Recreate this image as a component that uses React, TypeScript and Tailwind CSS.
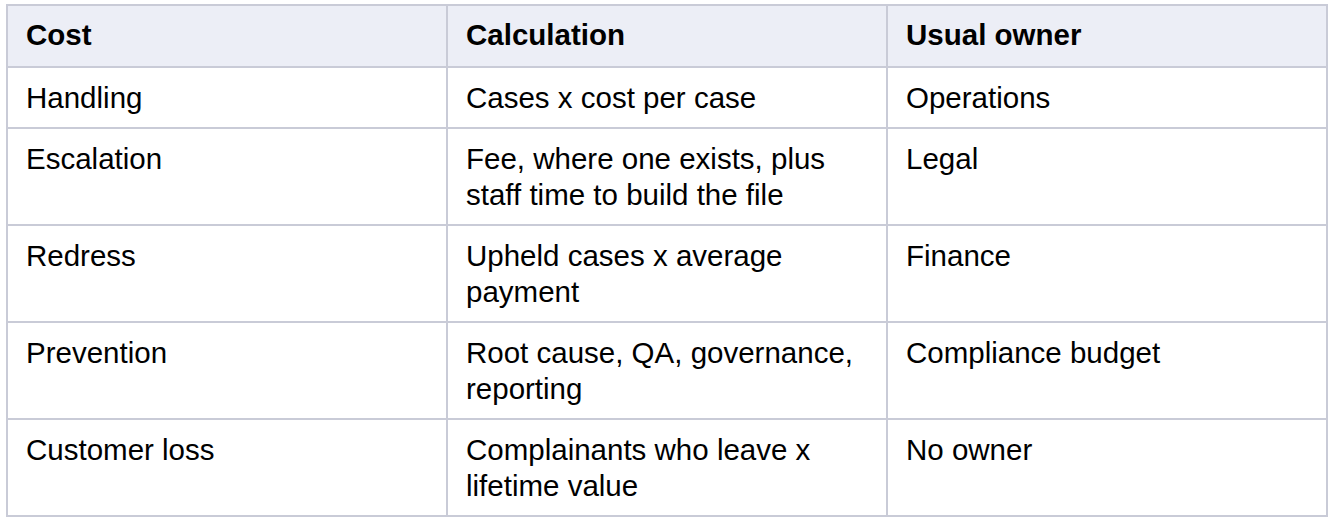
import React from "react";

const rows: [string, string, string][] = [
  ["Handling", "Cases x cost per case", "Operations"],
  ["Escalation", "Fee, where one exists, plus staff time to build the file", "Legal"],
  ["Redress", "Upheld cases x average payment", "Finance"],
  ["Prevention", "Root cause, QA, governance, reporting", "Compliance budget"],
  ["Customer loss", "Complainants who leave x lifetime value", "No owner"],
];

export default function App() {
  return (
    <div className="bg-white w-[1332px] h-[519px] pt-[4px] pl-[6px]" style={{ fontFamily: '"Liberation Sans", Arial, sans-serif' }}>
      <table className="w-[1322px] table-fixed border-collapse text-[29.5px] leading-[36px] text-black">
        <colgroup>
          <col className="w-1/3" />
          <col className="w-1/3" />
          <col className="w-1/3" />
        </colgroup>
        <thead>
          <tr className="bg-[#eceef6]">
            <th className="border-2 border-[#c9cbd7] px-[18px] pt-[11px] pb-[13px] text-left align-top font-bold">Cost</th>
            <th className="border-2 border-[#c9cbd7] px-[18px] pt-[11px] pb-[13px] text-left align-top font-bold">Calculation</th>
            <th className="border-2 border-[#c9cbd7] px-[18px] pt-[11px] pb-[13px] text-left align-top font-bold">Usual owner</th>
          </tr>
        </thead>
        <tbody>
          {rows.map((r) => (
            <tr key={r[0]}>
              {r.map((c, i) => (
                <td key={i} className="border-2 border-[#c9cbd7] px-[18px] pt-[12px] pb-[11px] align-top">
                  {c}
                </td>
              ))}
            </tr>
          ))}
        </tbody>
      </table>
    </div>
  );
}
